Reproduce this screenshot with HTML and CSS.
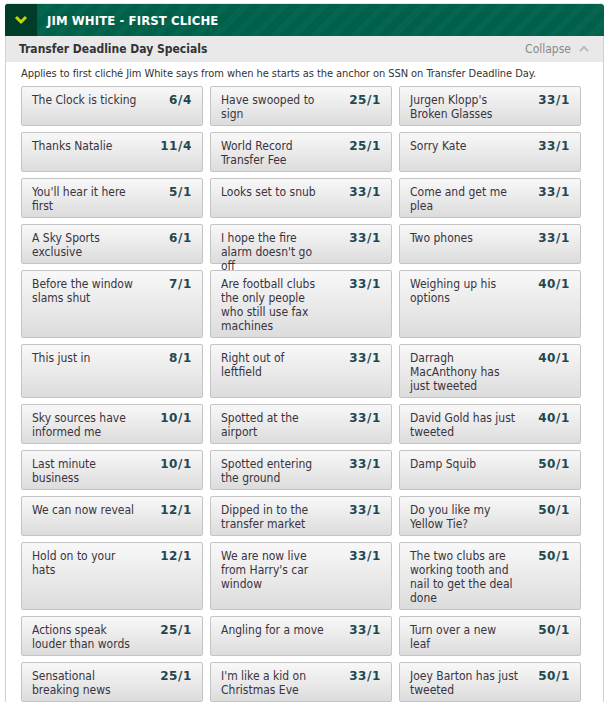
FILE: index.html
```html
<!DOCTYPE html>
<html>
<head>
<meta charset="utf-8">
<link rel="stylesheet" href="styles.css">
</head>
<body>
<div class="market">
  <div class="hdr">
    <div class="hdr-toggle">
      <svg width="14" height="10" viewBox="0 0 14 10"><polyline points="2,2 7,7 12,2" fill="none" stroke="#c9d400" stroke-width="3"/></svg>
    </div>
    <div class="hdr-title">JIM WHITE - FIRST CLICHE</div>
  </div>
  <div class="sub">
    <div class="sub-title">Transfer Deadline Day Specials</div>
    <div class="collapse">Collapse
      <svg width="12" height="8" viewBox="0 0 12 8"><polyline points="2,6 6,2 10,6" fill="none" stroke="#bbb" stroke-width="2"/></svg>
    </div>
  </div>
  <div class="body">
    <p class="desc">Applies to first cliché Jim White says from when he starts as the anchor on SSN on Transfer Deadline Day.</p>
    <div class="grid">
      <div class="sel"><span class="name">The Clock is ticking</span><span class="odds">6/4</span></div>
      <div class="sel"><span class="name">Have swooped to<br>sign</span><span class="odds">25/1</span></div>
      <div class="sel"><span class="name">Jurgen Klopp's<br>Broken Glasses</span><span class="odds">33/1</span></div>

      <div class="sel"><span class="name">Thanks Natalie</span><span class="odds">11/4</span></div>
      <div class="sel"><span class="name">World Record<br>Transfer Fee</span><span class="odds">25/1</span></div>
      <div class="sel"><span class="name">Sorry Kate</span><span class="odds">33/1</span></div>

      <div class="sel"><span class="name">You'll hear it here<br>first</span><span class="odds">5/1</span></div>
      <div class="sel"><span class="name">Looks set to snub</span><span class="odds">33/1</span></div>
      <div class="sel"><span class="name">Come and get me<br>plea</span><span class="odds">33/1</span></div>

      <div class="sel"><span class="name">A Sky Sports<br>exclusive</span><span class="odds">6/1</span></div>
      <div class="sel sel-fixed"><span class="name">I hope the fire<br>alarm doesn't go<br>off</span><span class="odds">33/1</span></div>
      <div class="sel"><span class="name">Two phones</span><span class="odds">33/1</span></div>

      <div class="sel"><span class="name">Before the window<br>slams shut</span><span class="odds">7/1</span></div>
      <div class="sel"><span class="name">Are football clubs<br>the only people<br>who still use fax<br>machines</span><span class="odds">33/1</span></div>
      <div class="sel"><span class="name">Weighing up his<br>options</span><span class="odds">40/1</span></div>

      <div class="sel"><span class="name">This just in</span><span class="odds">8/1</span></div>
      <div class="sel"><span class="name">Right out of<br>leftfield</span><span class="odds">33/1</span></div>
      <div class="sel"><span class="name">Darragh<br>MacAnthony has<br>just tweeted</span><span class="odds">40/1</span></div>

      <div class="sel"><span class="name">Sky sources have<br>informed me</span><span class="odds">10/1</span></div>
      <div class="sel"><span class="name">Spotted at the<br>airport</span><span class="odds">33/1</span></div>
      <div class="sel"><span class="name">David Gold has just<br>tweeted</span><span class="odds">40/1</span></div>

      <div class="sel"><span class="name">Last minute<br>business</span><span class="odds">10/1</span></div>
      <div class="sel"><span class="name">Spotted entering<br>the ground</span><span class="odds">33/1</span></div>
      <div class="sel"><span class="name">Damp Squib</span><span class="odds">50/1</span></div>

      <div class="sel"><span class="name">We can now reveal</span><span class="odds">12/1</span></div>
      <div class="sel"><span class="name">Dipped in to the<br>transfer market</span><span class="odds">33/1</span></div>
      <div class="sel"><span class="name">Do you like my<br>Yellow Tie?</span><span class="odds">50/1</span></div>

      <div class="sel"><span class="name">Hold on to your<br>hats</span><span class="odds">12/1</span></div>
      <div class="sel"><span class="name">We are now live<br>from Harry's car<br>window</span><span class="odds">33/1</span></div>
      <div class="sel"><span class="name">The two clubs are<br>working tooth and<br>nail to get the deal<br>done</span><span class="odds">50/1</span></div>

      <div class="sel"><span class="name">Actions speak<br>louder than words</span><span class="odds">25/1</span></div>
      <div class="sel"><span class="name">Angling for a move</span><span class="odds">33/1</span></div>
      <div class="sel"><span class="name">Turn over a new<br>leaf</span><span class="odds">50/1</span></div>

      <div class="sel"><span class="name">Sensational<br>breaking news</span><span class="odds">25/1</span></div>
      <div class="sel"><span class="name">I'm like a kid on<br>Christmas Eve</span><span class="odds">33/1</span></div>
      <div class="sel"><span class="name">Joey Barton has just<br>tweeted</span><span class="odds">50/1</span></div>
    </div>
  </div>
</div>
</body>
</html>
```
FILE: styles.css
```css
html, body {
  margin: 0;
  padding: 0;
  background: #fff;
}
body {
  padding: 3px 5px 0 5px;
  font-family: "DejaVu Sans Condensed", "DejaVu Sans", sans-serif;
  font-stretch: condensed;
  color: #333;
}
.market {
  width: 599px;
  border-top: 1px solid #e4e4e4;
  border-radius: 3px 3px 0 0;
}
.hdr {
  display: flex;
  height: 32px;
  background-color: #00614b;
  background-image: repeating-linear-gradient(135deg, rgba(255,255,255,0.025) 0 6px, rgba(0,0,0,0) 6px 14px);
  border-radius: 3px 3px 0 0;
  overflow: hidden;
}
.hdr-toggle {
  width: 32px;
  background: #003c28;
  border-right: 1px solid #0b5a44;
  display: flex;
  align-items: center;
  justify-content: center;
}
.hdr-title {
  padding-left: 9px;
  display: flex;
  align-items: center;
  color: #fff;
  font-weight: bold;
  font-size: 13px;
  letter-spacing: 0.1px;
}
.sub {
  height: 26px;
  background: #e9e9e9;
  border-left: 1px solid #d0d0d0;
  border-right: 1px solid #d0d0d0;
  display: flex;
  align-items: center;
  justify-content: space-between;
  padding: 0 13px 0 13px;
}
.sub-title {
  font-weight: bold;
  font-size: 12px;
  color: #333;
}
.collapse {
  font-size: 12px;
  color: #8a8a8a;
  display: flex;
  align-items: center;
  gap: 7px;
}
.body {
  border-left: 1px solid #d0d0d0;
  border-right: 1px solid #d0d0d0;
  padding: 0 21px 0 15px;
}
.desc {
  margin: 0;
  padding: 5px 0 6px 0;
  font-size: 11px;
  line-height: 13px;
  letter-spacing: -0.06px;
  color: #333;
}
.grid {
  display: grid;
  grid-template-columns: repeat(3, 182px);
  column-gap: 7px;
  row-gap: 6px;
}
.sel {
  min-height: 40px;
  box-sizing: border-box;
  border: 1px solid #c4c4c4;
  border-radius: 2px;
  background: linear-gradient(#f8f8f8, #dcdcdc);
  display: flex;
  justify-content: space-between;
  align-items: flex-start;
  padding: 6px 10px 4px 10px;
  font-size: 12px;
  line-height: 14px;
}
.sel-fixed {
  height: 40px;
}
.name {
  white-space: nowrap;
  color: #3a3340;
}
.odds {
  font-family: "DejaVu Sans", sans-serif;
  font-stretch: normal;
  font-weight: bold;
  letter-spacing: 0.6px;
  color: #1f4850;
}
```
